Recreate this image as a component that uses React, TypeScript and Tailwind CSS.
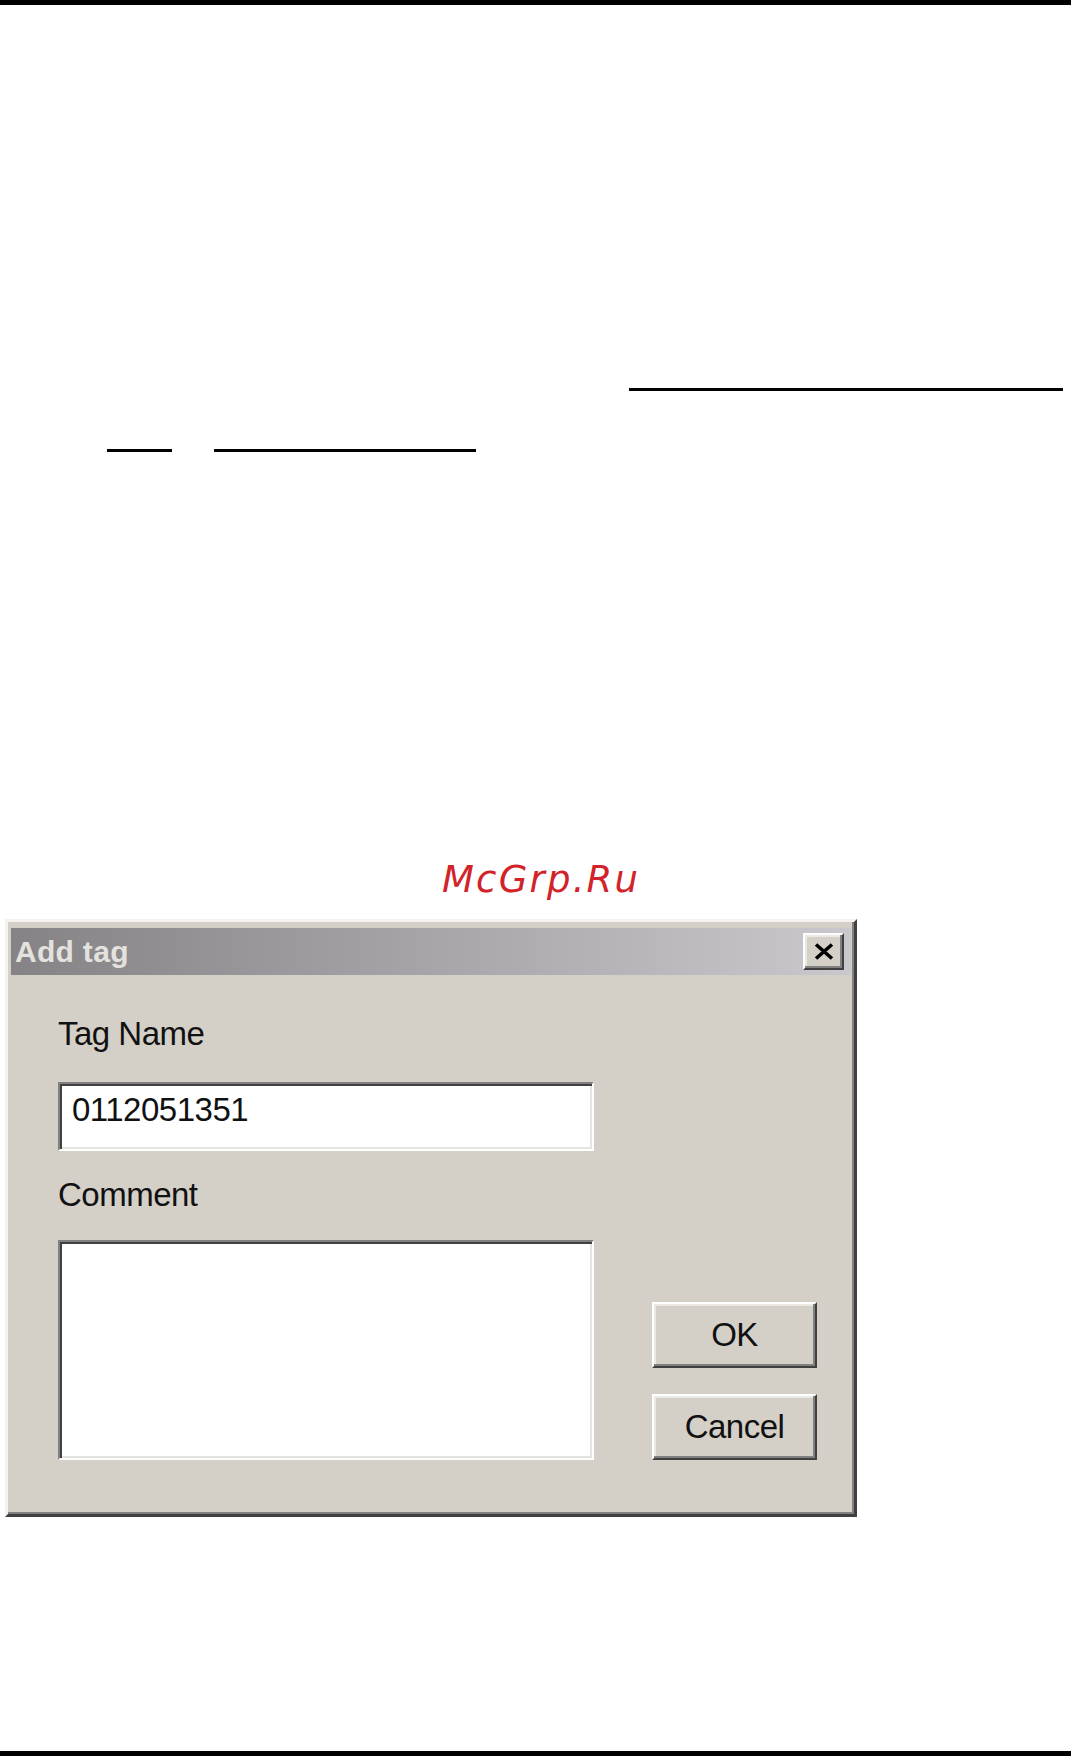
import React from "react";

const raised =
  "border-t-2 border-l-2 border-r-2 border-b-2 border-t-white border-l-white border-r-[#404040] border-b-[#404040] shadow-[inset_-2px_-2px_0_#808080,inset_2px_2px_0_#ebe9e4] bg-[#d4d0c8]";

const sunken =
  "border-t-2 border-l-2 border-r-2 border-b-2 border-t-[#808080] border-l-[#808080] border-r-white border-b-white shadow-[inset_2px_2px_0_#404040,inset_-2px_-2px_0_#e6e4df] bg-white";

function CloseButton() {
  return (
    <div className={`w-[41px] h-[37px] mr-[7px] flex items-center justify-center ${raised}`}>
      <svg width="22" height="17" viewBox="0 0 22 17">
        <path d="M3 1.5 L19 15.5 M19 1.5 L3 15.5" stroke="#000" strokeWidth="3.6" strokeLinecap="butt" />
      </svg>
    </div>
  );
}

function DialogButton({ label }: { label: string }) {
  return (
    <div
      className={`w-[165px] h-[66px] flex items-center justify-center text-[33px] leading-[40px] tracking-[-0.5px] text-[#111] ${raised}`}
    >
      {label}
    </div>
  );
}

function AddTagDialog() {
  return (
    <div
      className="ml-[5px] mt-[17px] w-[852px] h-[598px] bg-[#d4d0c8] border-t-[3px] border-l-[3px] border-r-[3px] border-b-[3px] border-t-[#f4f3f0] border-l-[#f4f3f0] border-r-[#404040] border-b-[#404040] shadow-[inset_-2px_-2px_0_#808080] pt-[6px] px-[3px]"
      style={{ fontFamily: '"Liberation Sans", Arial, sans-serif' }}
    >
      {/* barra de título (ventana inactiva) */}
      <div className="h-[47px] flex items-center justify-between bg-gradient-to-r from-[#858386] to-[#cac8cd]">
        <span className="pl-[4px] text-[30px] leading-[47px] font-bold tracking-[0.3px] text-[#e4e2de]">Add tag</span>
        <CloseButton />
      </div>

      <div className="pl-[47px] flex gap-[58px]">
        <div className="w-[536px] flex flex-col">
          <div className="mt-[39px] h-[40px] text-[33px] leading-[40px] tracking-[-0.5px] text-[#111]">Tag Name</div>
          <div className={`mt-[28px] h-[69px] pl-[12px] pt-[6px] ${sunken}`}>
            <span className="text-[33px] leading-[40px] tracking-[-0.5px] text-[#111]">0112051351</span>
          </div>
          <div className="mt-[24px] h-[40px] text-[33px] leading-[40px] tracking-[-0.5px] text-[#111]">Comment</div>
          <div className={`mt-[25px] h-[220px] ${sunken}`} />
        </div>

        <div className="w-[165px] flex flex-col justify-end gap-[26px]">
          <DialogButton label="OK" />
          <DialogButton label="Cancel" />
        </div>
      </div>
    </div>
  );
}

export default function App() {
  return (
    <div className="w-[1071px] h-[1756px] bg-white flex flex-col">
      <div className="h-[5px] bg-black" />

      {/* líneas de la página del manual */}
      <div className="mt-[383px] ml-[629px] w-[434px] h-[3px] bg-black" />
      <div className="mt-[58px] flex h-[3px]">
        <div className="ml-[107px] w-[65px] bg-black" />
        <div className="ml-[42px] w-[262px] bg-black" />
      </div>

      <div
        className="mt-[406px] pl-[442px] h-[44px] text-[37px] leading-[44px] italic tracking-[2.2px] text-[#d2232a]"
        style={{ fontFamily: '"DejaVu Sans", sans-serif' }}
      >
        McGrp.Ru
      </div>

      <AddTagDialog />

      <div className="flex-1" />
      <div className="h-[5px] bg-black" />
    </div>
  );
}
